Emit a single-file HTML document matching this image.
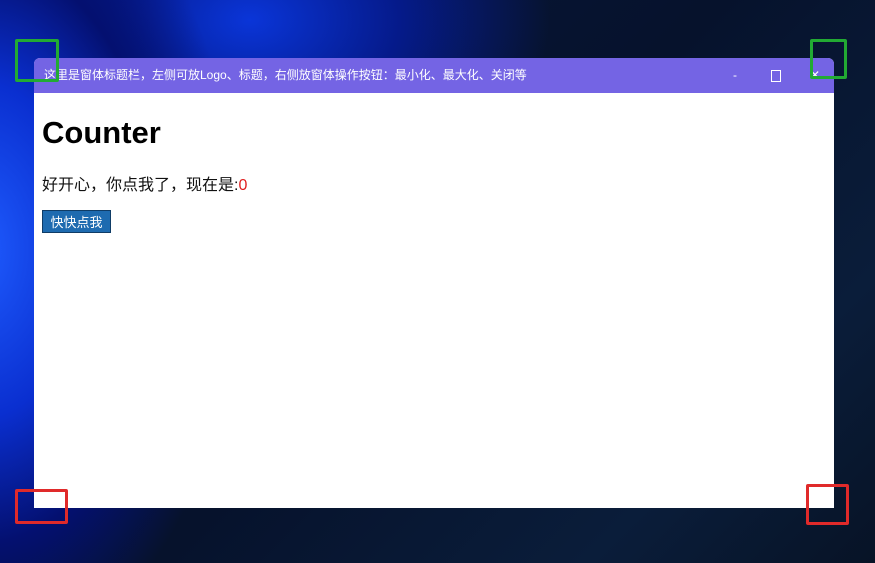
<!DOCTYPE html>
<html><head><meta charset="utf-8"><style>
html,body{margin:0;width:875px;height:563px;overflow:hidden}
body{position:relative;font-family:"Liberation Sans","Noto Sans CJK SC",sans-serif;
background:radial-gradient(ellipse 260px 420px at -20px 250px,#1f5cff 0%,#0a2fd0 40%,#041070 70%,transparent 100%),
radial-gradient(ellipse 300px 200px at 250px 20px,#0a35d8 0%,#051a8a 50%,transparent 100%),
linear-gradient(135deg,#071840 0%,#06122c 50%,#0a1d3a 80%,#071326 100%);}
.win{position:absolute;left:34px;top:58px;width:800px;height:450px;background:#fff;border-radius:6px 6px 0 0;overflow:hidden}
.tb{height:35px;background:#7464e4;color:#fff;font-size:12px;line-height:35px;padding-left:10px;position:relative}
.tb .b{position:absolute;top:0;color:#fff;font-size:12px}
h1{margin:0;position:absolute;left:8px;top:57px;font-size:31px;font-weight:bold;color:#000}
p{position:absolute;left:8px;top:113px;margin:0;font-size:16px;color:#111}
p span{color:#e02020}
button{position:absolute;left:8px;top:152px;width:69px;height:23px;background:#1e6bb0;border:1px solid #0f3c66;color:#fff;font-size:13px;font-family:inherit;padding:0}
.box{position:absolute;border:3px solid;box-sizing:border-box;border-radius:2px}
</style></head><body>
<div class="win">
<div class="tb">这里是窗体标题栏，左侧可放Logo、标题，右侧放窗体操作按钮：最小化、最大化、关闭等
<span class="b" style="left:699px">-</span>
<span style="position:absolute;left:737px;top:12px;width:8px;height:10px;border:1px solid #fff"></span>
<span class="b" style="left:776px">✕</span>
</div>
<h1>Counter</h1>
<p>好开心，你点我了，现在是:<span>0</span></p>
<button>快快点我</button>
</div>
<div class="box" style="left:15px;top:39px;width:44px;height:43px;border-color:#22aa33"></div>
<div class="box" style="left:810px;top:39px;width:37px;height:40px;border-color:#22aa33"></div>
<div class="box" style="left:15px;top:489px;width:53px;height:35px;border-color:#e02a2a"></div>
<div class="box" style="left:806px;top:484px;width:43px;height:41px;border-color:#e02a2a"></div>
</body></html>
